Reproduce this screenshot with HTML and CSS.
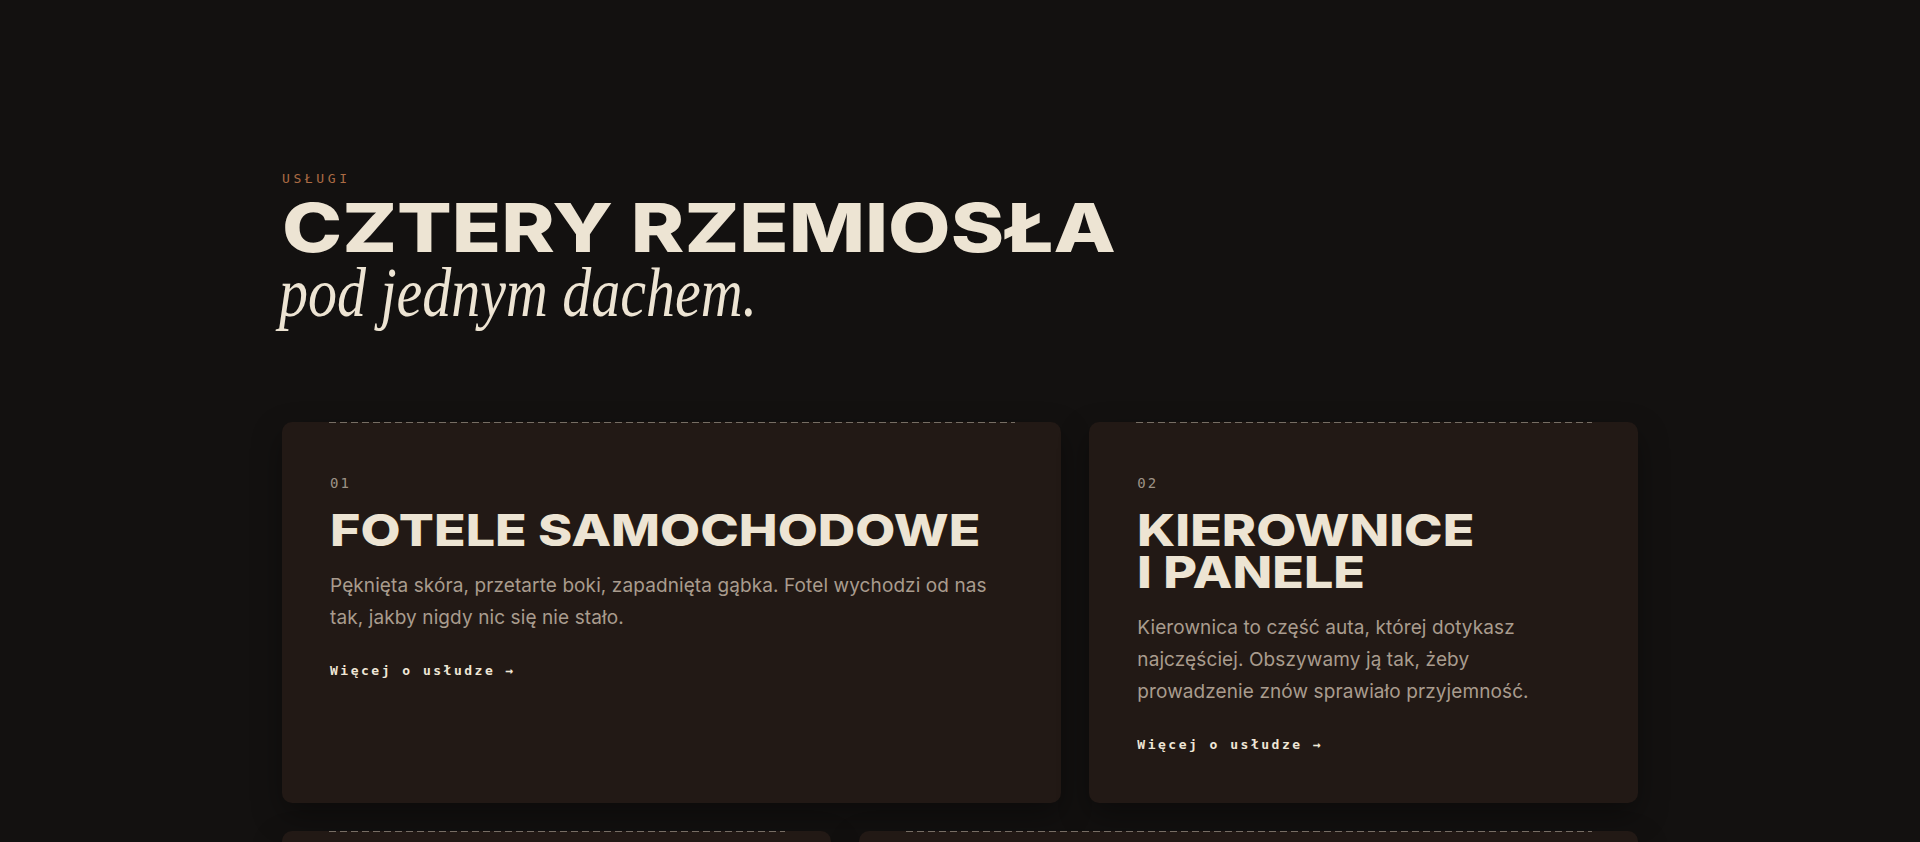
FILE: index.html
```html
<!DOCTYPE html>
<html lang="pl">
<head>
<meta charset="utf-8">
<title>Usługi — cztery rzemiosła</title>
<link rel="stylesheet" href="styles.css">
</head>
<body>
<section class="services">
  <div class="container">
    <header class="services-head">
      <p class="eyebrow">USŁUGI</p>
      <h2 class="services-title">
        <span class="title-caps">CZTERY RZEMIOSŁA</span>
        <span class="title-italic">pod jednym dachem.</span>
      </h2>
    </header>

    <div class="services-grid">
      <article class="service-card span-7">
        <p class="card-num">01</p>
        <h3 class="card-title"><span class="wide">FOTELE SAMOCHODOWE</span></h3>
        <p class="card-text">Pęknięta skóra, przetarte boki, zapadnięta gąbka. Fotel wychodzi od nas tak, jakby nigdy nic się nie stało.</p>
        <a class="card-link" href="#fotele">Więcej o usłudze →</a>
      </article>

      <article class="service-card span-5">
        <p class="card-num">02</p>
        <h3 class="card-title"><span class="wide">KIEROWNICE<br>I PANELE</span></h3>
        <p class="card-text card-text--narrow">Kierownica to część auta, której dotykasz najczęściej. Obszywamy ją tak, żeby prowadzenie znów sprawiało przyjemność.</p>
        <a class="card-link" href="#kierownice">Więcej o usłudze →</a>
      </article>

      <article class="service-card span-5">
        <p class="card-num">03</p>
        <h3 class="card-title"><span class="wide">PODSUFITKI</span></h3>
        <p class="card-text card-text--narrow">Opadająca podsufitka to klasyka starszych aut. Wymieniamy materiał i klej, żeby znów było równo.</p>
        <a class="card-link" href="#podsufitki">Więcej o usłudze →</a>
      </article>

      <article class="service-card span-7">
        <p class="card-num">04</p>
        <h3 class="card-title"><span class="wide">RENOWACJA SKÓRY</span></h3>
        <p class="card-text">Czyszczenie, odżywianie i koloryzacja. Przywracamy wnętrzu kolor i miękkość bez wymiany tapicerki.</p>
        <a class="card-link" href="#renowacja">Więcej o usłudze →</a>
      </article>
    </div>
  </div>
</section>
</body>
</html>
```

FILE: styles.css
```css
* {
  box-sizing: border-box;
}

html,
body {
  margin: 0;
  padding: 0;
}

body {
  background: #131110;
  color: #ede4d3;
  font-family: Inter, "Noto Sans", sans-serif;
}

.container {
  max-width: 1356px;
  margin: 0 auto;
}

.services {
  padding: 171px 0 120px;
}

/* Section heading */
.eyebrow {
  margin: 0 0 6px;
  font-family: "DejaVu Sans Mono", "Liberation Mono", monospace;
  font-size: 13px;
  line-height: 16px;
  letter-spacing: 3.6px;
  color: #ab6b44;
}

.services-title {
  margin: 0;
  font-weight: 400;
}

.title-caps {
  display: block;
  font-family: Inter, sans-serif;
  font-weight: 800;
  font-size: 68px;
  line-height: 1;
  color: #ede4d3;
  transform: scaleX(1.19);
  transform-origin: left center;
  white-space: nowrap;
}

.title-italic {
  display: block;
  height: 65px;
  margin-left: -3px;
  font-family: "Liberation Serif", "DejaVu Serif", serif;
  font-style: italic;
  font-weight: 400;
  font-size: 69px;
  line-height: 64px;
  color: #ede4d3;
  transform: scaleX(0.84);
  transform-origin: left center;
  white-space: nowrap;
}

/* Bento grid of service cards */
.services-grid {
  display: grid;
  grid-template-columns: repeat(12, 1fr);
  gap: 28px;
  margin-top: 96px;
}

.span-7 {
  grid-column: span 7;
}

.span-5 {
  grid-column: span 5;
}

.service-card {
  position: relative;
  padding: 52px 48px 48px;
  background: #221915;
  border-radius: 10px;
  box-shadow: 0 12px 30px rgba(0, 0, 0, 0.35);
}

/* stitched seam along the top edge */
.service-card::before {
  content: "";
  position: absolute;
  top: 0;
  left: 47px;
  right: 46px;
  height: 1px;
  background: repeating-linear-gradient(90deg, rgba(222, 212, 196, 0.45) 0 7px, transparent 7px 11px);
}

.card-num {
  margin: 0 0 18px;
  font-family: "DejaVu Sans Mono", "Liberation Mono", monospace;
  font-size: 14px;
  line-height: 18px;
  letter-spacing: 2px;
  color: #9d9286;
}

.card-title {
  margin: 0 0 18px;
  font-family: Inter, sans-serif;
  font-weight: 800;
  font-size: 44px;
  line-height: 0.95;
  color: #ede4d3;
}

.card-title .wide {
  display: inline-block;
  transform: scaleX(1.18);
  transform-origin: left center;
  white-space: nowrap;
}

.card-text {
  max-width: 670px;
  margin: 0 0 25px;
  font-size: 19px;
  line-height: 32px;
  letter-spacing: 0.1px;
  color: #a99c8e;
}

.card-text--narrow {
  max-width: 425px;
}

.card-link {
  display: inline-block;
  font-family: "DejaVu Sans Mono", "Liberation Mono", monospace;
  font-weight: 700;
  font-size: 13px;
  line-height: 20px;
  letter-spacing: 2.5px;
  color: #efe6d6;
  text-decoration: none;
}
```
